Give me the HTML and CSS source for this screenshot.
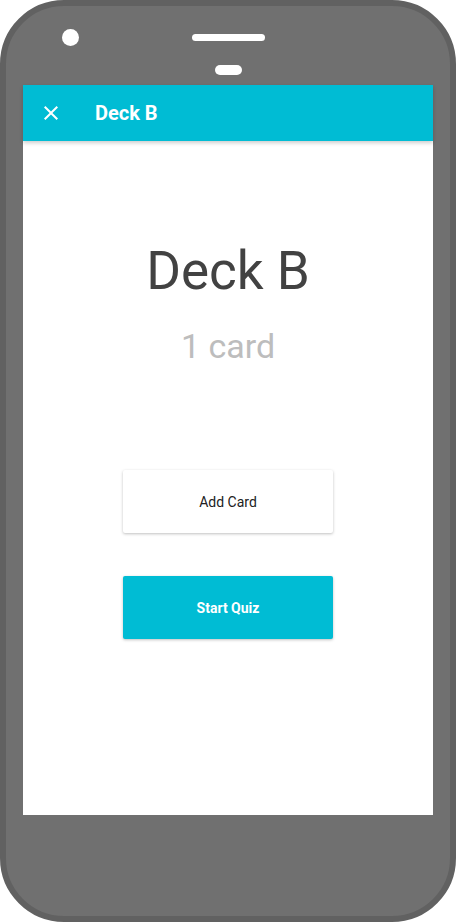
FILE: index.html
```html
<!DOCTYPE html>
<html>
<head>
<meta charset="utf-8">
<link rel="stylesheet" href="styles.css">
</head>
<body>
<div class="phone">
  <div class="bezel-top">
    <span class="camera"></span>
    <span class="speaker"></span>
    <span class="sensor"></span>
  </div>
  <div class="screen">
    <header class="appbar">
      <svg class="close" width="24" height="24" viewBox="0 0 24 24"><path d="M19 6.41L17.59 5 12 10.59 6.41 5 5 6.41 10.59 12 5 17.59 6.41 19 12 13.41 17.59 19 19 17.59 13.41 12z" fill="#fff"/></svg>
      <span class="appbar-title">Deck B</span>
    </header>
    <main class="content">
      <h1 class="deck-title">Deck B</h1>
      <p class="deck-count">1 card</p>
      <div class="actions">
        <button class="btn btn-plain">Add Card</button>
        <button class="btn btn-primary">Start Quiz</button>
      </div>
    </main>
  </div>
</div>
</body>
</html>
```
FILE: styles.css
```css
* { box-sizing: border-box; }
html, body { margin: 0; padding: 0; background: #fff; }
body { font-family: Roboto, "Noto Sans", sans-serif; }
.phone {
  width: 456px;
  height: 922px;
  background: #707070;
  border: 6px solid #616161;
  border-radius: 64px;
  padding: 0 17px;
  display: flex;
  flex-direction: column;
}
.bezel-top {
  position: relative;
  height: 79px;
  flex: none;
}
.camera {
  position: absolute;
  left: 39px; top: 23px;
  width: 17px; height: 17px;
  border-radius: 50%;
  background: #fff;
}
.speaker {
  position: absolute;
  left: 169px; top: 28px;
  width: 73px; height: 7px;
  border-radius: 4px;
  background: #fff;
}
.sensor {
  position: absolute;
  left: 192px; top: 59px;
  width: 27px; height: 10px;
  border-radius: 5px;
  background: #fff;
}
.screen {
  width: 410px;
  height: 730px;
  background: #fff;
  display: flex;
  flex-direction: column;
}
.appbar {
  height: 56px;
  background: #00bcd4;
  display: flex;
  align-items: center;
  padding-left: 16px;
  box-shadow: 0 2px 4px rgba(0,0,0,0.2);
  position: relative;
  z-index: 1;
}
.close { display: block; }
.appbar-title {
  margin-left: 32px;
  color: #fff;
  font-size: 20px;
  font-weight: 700;
}
.content {
  flex: 1;
  display: flex;
  flex-direction: column;
  align-items: center;
  padding-top: 98px;
}
.deck-title {
  margin: 0;
  font-size: 53px;
  font-weight: 400;
  line-height: 64px;
  color: #424242;
}
.deck-count {
  margin: 23px 0 0;
  font-size: 34px;
  line-height: 40px;
  color: #bdbdbd;
}
.actions {
  margin-top: 104px;
  display: flex;
  flex-direction: column;
  gap: 43px;
}
.btn {
  width: 210px;
  height: 63px;
  border: none;
  border-radius: 2px;
  font-family: Roboto, "Noto Sans", sans-serif;
  font-size: 14px;
  box-shadow: 0 1px 3px rgba(0,0,0,0.25);
}
.btn-plain {
  background: #fff;
  color: #212121;
}
.btn-primary {
  background: #00bcd4;
  color: #fff;
  font-weight: 700;
}
```
